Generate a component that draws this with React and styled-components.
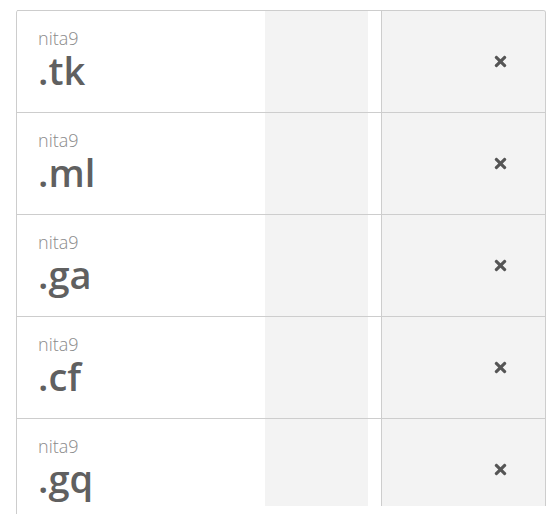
import React from 'react';
import styled, { createGlobalStyle } from 'styled-components';
import { FaTimes } from 'react-icons/fa';

const GlobalStyle = createGlobalStyle`
  html, body {
    margin: 0;
    padding: 0;
    background: #fff;
    overflow: hidden;
  }
  body {
    font-family: "Open Sans", "Liberation Sans", sans-serif;
  }
`;

const Frame = styled.div`
  margin: 10px 0 0 16px;
  width: 530px;
  height: calc(100vh - 10px);
  border-left: 1px solid #cdcdcd;
  border-top-left-radius: 3px;
  box-sizing: border-box;
`;

const Table = styled.div`
  height: 496px;
  overflow: hidden;
  border-top: 1px solid #cdcdcd;
  border-right: 1px solid #cdcdcd;
  border-top-right-radius: 3px;
  box-sizing: border-box;
`;

const Row = styled.div`
  display: grid;
  grid-template-columns: 248px 103px 13px 164px;
  height: 102px;
  border-bottom: 1px solid #cdcdcd;
  box-sizing: border-box;
`;

const NameCell = styled.div`
  display: flex;
  flex-direction: column;
  align-items: flex-start;
  padding: 16px 0 0 21px;
`;

const Label = styled.span`
  font-size: 18px;
  font-weight: 300;
  line-height: 22px;
  color: #8a8a8a;
`;

const Domain = styled.span`
  font-size: 38px;
  font-weight: 600;
  line-height: 42px;
  color: #606060;
`;

const Shade = styled.div`
  background: #f3f3f3;
`;

const Gap = styled.div`
  background: #fff;
`;

const Action = styled.div`
  display: flex;
  align-items: center;
  justify-content: flex-end;
  padding-right: 36px;
  background: #f3f3f3;
  border-left: 1px solid #cdcdcd;
  color: #555;
`;

const domains = ['.tk', '.ml', '.ga', '.cf', '.gq'];

export default function App() {
  return (
    <>
      <GlobalStyle />
      <Frame>
        <Table>
          {domains.map((tld) => (
            <Row key={tld}>
              <NameCell>
                <Label>nita9</Label>
                <Domain>{tld}</Domain>
              </NameCell>
              <Shade />
              <Gap />
              <Action>
                <FaTimes size={17} />
              </Action>
            </Row>
          ))}
        </Table>
      </Frame>
    </>
  );
}
